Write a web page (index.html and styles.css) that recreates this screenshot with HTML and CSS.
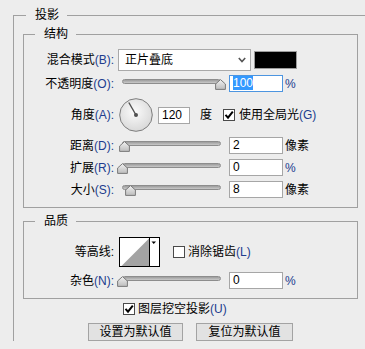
FILE: index.html
```html
<!DOCTYPE html>
<html lang="zh-CN">
<head>
    <meta charset="UTF-8">
    <meta name="viewport" content="width=device-width, initial-scale=1.0">
    <title>图层样式 - 投影</title>
    <link rel="stylesheet" href="styles.css">
</head>
<body>
    <fieldset class="group outer">
        <legend>投影</legend>

        <fieldset class="group box">
            <legend>结构</legend>

            <div class="row rowBlend">
                <label class="lbl">混合模式<span class="key">(B):</span></label>
                <div class="select">
                    <span>正片叠底</span>
                    <svg width="8" height="6" viewBox="0 0 8 6"><polyline points="0.8,1 4,4.5 7.2,1" fill="none" stroke="#555" stroke-width="1.6"/></svg>
                </div>
                <div class="swatch"></div>
            </div>

            <div class="row rowOpacity">
                <label class="lbl">不透明度<span class="key">(O):</span></label>
                <div class="slider">
                    <div class="track"></div>
                    <svg class="thumb" style="left: 93px" width="11" height="11" viewBox="0 0 11 11"><use href="#thumbShape"/></svg>
                </div>
                <div class="num focus"><span class="sel">100</span></div>
                <span class="unit key">%</span>
            </div>

            <div class="row rowAngle">
                <label class="lbl">角度<span class="key">(A):</span></label>
                <svg class="dial" width="34" height="34" viewBox="0 0 34 34">
                    <defs>
                        <radialGradient id="dialFill" cx="45%" cy="40%" r="65%">
                            <stop offset="0" stop-color="#fbfbfb"/>
                            <stop offset="1" stop-color="#d6d6d6"/>
                        </radialGradient>
                    </defs>
                    <circle cx="17" cy="17" r="16.3" fill="url(#dialFill)" stroke="#7c7c7c"/>
                    <line x1="17" y1="17" x2="9.8" y2="4.5" stroke="#505050" stroke-width="1.4"/>
                    <circle cx="17" cy="17" r="2" fill="#505050"/>
                </svg>
                <div class="num small">120</div>
                <span class="deg">度</span>
                <span class="check on"><svg width="10" height="10" viewBox="0 0 10 10"><polyline points="1.5,4.8 4,7.6 8.8,1.6" fill="none" stroke="#000" stroke-width="2"/></svg></span>
                <span class="checkText">使用全局光<span class="key">(G)</span></span>
            </div>

            <div class="row">
                <label class="lbl">距离<span class="key">(D):</span></label>
                <div class="slider">
                    <div class="track"></div>
                    <svg class="thumb" style="left: -3px" width="11" height="11" viewBox="0 0 11 11"><use href="#thumbShape"/></svg>
                </div>
                <div class="num">2</div>
                <span class="unit">像素</span>
            </div>

            <div class="row">
                <label class="lbl">扩展<span class="key">(R):</span></label>
                <div class="slider">
                    <div class="track"></div>
                    <svg class="thumb" style="left: -5px" width="11" height="11" viewBox="0 0 11 11"><use href="#thumbShape"/></svg>
                </div>
                <div class="num">0</div>
                <span class="unit key">%</span>
            </div>

            <div class="row">
                <label class="lbl">大小<span class="key">(S):</span></label>
                <div class="slider">
                    <div class="track"></div>
                    <svg class="thumb" style="left: 3px" width="11" height="11" viewBox="0 0 11 11"><use href="#thumbShape"/></svg>
                </div>
                <div class="num">8</div>
                <span class="unit">像素</span>
            </div>
        </fieldset>

        <fieldset class="group box quality">
            <legend>品质</legend>

            <div class="row rowContour">
                <label class="lbl">等高线:</label>
                <svg class="contour" width="41" height="30" viewBox="0 0 41 30">
                    <rect x="0.5" y="0.5" width="40" height="29" fill="#fff" stroke="#000"/>
                    <polygon points="2.5,29 30,1.5 30,29" fill="#a3a3a3"/>
                    <line x1="30.5" y1="0" x2="30.5" y2="30" stroke="#000"/>
                    <polygon points="32.5,4.5 37,4.5 34.75,7" fill="#000"/>
                </svg>
                <span class="check off"></span>
                <span class="checkText">消除锯齿<span class="key">(L)</span></span>
            </div>

            <div class="row">
                <label class="lbl">杂色<span class="key">(N):</span></label>
                <div class="slider">
                    <div class="track"></div>
                    <svg class="thumb" style="left: -5px" width="11" height="11" viewBox="0 0 11 11"><use href="#thumbShape"/></svg>
                </div>
                <div class="num">0</div>
                <span class="unit key">%</span>
            </div>
        </fieldset>

        <div class="knockout">
            <span class="check on"><svg width="10" height="10" viewBox="0 0 10 10"><polyline points="1.5,4.8 4,7.6 8.8,1.6" fill="none" stroke="#000" stroke-width="2"/></svg></span>
            <span class="checkText">图层挖空投影<span class="key">(U)</span></span>
        </div>

        <div class="buttons">
            <button class="btn">设置为默认值</button>
            <button class="btn wide">复位为默认值</button>
        </div>
    </fieldset>

    <!-- forma do cursor dos sliders -->
    <svg width="0" height="0" class="defs">
        <defs>
            <linearGradient id="thumbFill" x1="0" y1="0" x2="0" y2="1">
                <stop offset="0" stop-color="#f2f2f2"/>
                <stop offset="1" stop-color="#bcbcbc"/>
            </linearGradient>
            <polygon id="thumbShape" points="5.5,0.6 10.4,5 10.4,10.4 0.6,10.4 0.6,5" fill="url(#thumbFill)" stroke="#7a7a7a" stroke-linejoin="round"/>
        </defs>
    </svg>
</body>
</html>
```

FILE: styles.css
```css
* {
  box-sizing: border-box;
  margin: 0;
  padding: 0;
}

html, body {
  overflow: hidden;
}

body {
  width: 365px;
  height: 349px;
  background-color: #ededed;
  font-family: "Liberation Sans", "Noto Sans CJK SC", sans-serif;
  font-size: 12px;
  line-height: 16px;
  color: #000;
}

.defs {
  position: absolute;
  top: 0;
  left: 0;
}

.group {
  border: 1px solid #a0a0a0;
  min-width: 0;
}

.group legend {
  margin-left: 11px;
  padding: 0 8px 0 9px;
  line-height: 16px;
}

/* o quadro externo continua para fora da janela */
.outer {
  width: 352px;
  margin: 7px 0 0 13px;
  padding: 3px 0 0 9px;
  border-right: none;
  border-bottom: none;
}

.outer > legend {
  margin-left: 3px;
}

.box {
  width: 335px;
  padding: 7px 0 9px 0;
}

.quality {
  margin-top: 5px;
  padding-top: 8px;
}

.row {
  display: flex;
  align-items: center;
  height: 17px;
  margin-top: 5px;
}

.rowBlend {
  height: 22px;
  margin-top: 0;
}

.rowOpacity {
  margin-top: 4px;
}

.rowAngle {
  height: 34px;
  margin-top: 6px;
}

.rowContour {
  height: 30px;
  margin-top: 0;
}

.lbl {
  width: 90px;
  flex-shrink: 0;
  text-align: right;
}

.key {
  color: #213c8e;
}

.select {
  width: 133px;
  height: 22px;
  margin-left: 4px;
  padding: 0 4px 0 6px;
  display: flex;
  align-items: center;
  justify-content: space-between;
  background-color: #fff;
  border: 1px solid #a9a9a9;
}

.swatch {
  width: 43px;
  height: 18px;
  margin-left: 3px;
  background-color: #000;
  border: 1px solid #9c9c9c;
}

.slider {
  position: relative;
  width: 99px;
  height: 17px;
  margin: 0 8px;
  flex-shrink: 0;
}

.track {
  height: 5px;
  margin-top: 4px;
  border: 1px solid #8d8d8d;
  border-radius: 3px;
  background: linear-gradient(#9c9c9c, #c9c9c9);
}

.thumb {
  position: absolute;
  top: 4px;
}

.num {
  width: 54px;
  height: 17px;
  padding-left: 3px;
  line-height: 15px;
  background-color: #fff;
  border: 1px solid #a6a6a6;
  flex-shrink: 0;
}

.num.small {
  width: 32px;
  margin-left: 5px;
}

.num.focus {
  border-color: #4d95e0;
}

.sel {
  background-color: #3399ff;
  color: #fff;
}

.unit {
  margin-left: 2px;
}

.dial {
  margin-left: 5px;
  flex-shrink: 0;
}

.deg {
  margin-left: 10px;
}

.check {
  width: 12px;
  height: 12px;
  display: flex;
  align-items: center;
  justify-content: center;
  background-color: #fff;
  border: 1px solid #4a4a4a;
  flex-shrink: 0;
}

.rowAngle .check {
  margin-left: 11px;
}

.checkText {
  margin-left: 4px;
}

.contour {
  margin-left: 5px;
  flex-shrink: 0;
}

.rowContour .check {
  margin-left: 13px;
}

.rowContour .checkText {
  margin-left: 3px;
}

.knockout {
  display: flex;
  align-items: center;
  height: 16px;
  margin-top: 2px;
  padding-left: 100px;
}

.knockout .checkText {
  margin-left: 3px;
}

.buttons {
  width: 335px;
  display: flex;
  justify-content: center;
  gap: 13px;
  margin-top: 6px;
}

.btn {
  width: 95px;
  height: 18px;
  font-family: inherit;
  font-size: 12px;
  line-height: 16px;
  color: #000;
  background-color: #e2e2e2;
  border: 1px solid #a3a3a3;
}

.btn.wide {
  width: 97px;
}
```
